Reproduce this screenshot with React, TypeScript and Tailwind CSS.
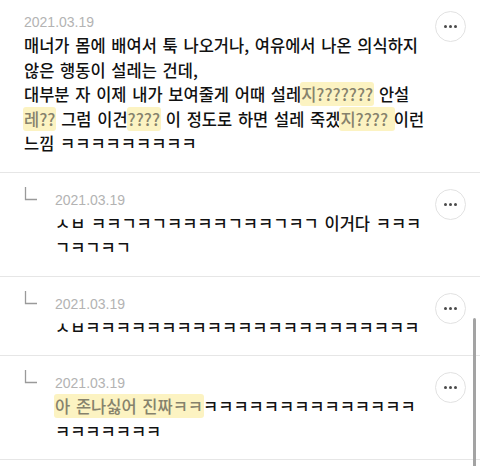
import React from "react";

type Part = { text: string; mark?: boolean };

type Comment = {
  id: number;
  date: string;
  reply?: boolean;
  lines: Part[][];
};

const comments: Comment[] = [
  {
    id: 1,
    date: "2021.03.19",
    lines: [
      [{ text: "매너가 몸에 배여서 툭 나오거나, 여유에서 나온 의식하지" }],
      [{ text: "않은 행동이 설레는 건데," }],
      [
        { text: "대부분 자 이제 내가 보여줄게 어때 설레" },
        { text: "지???????", mark: true },
        { text: " 안설" },
      ],
      [
        { text: "레??", mark: true },
        { text: " 그럼 이건" },
        { text: "????", mark: true },
        { text: " 이 정도로 하면 설레 죽겠" },
        { text: "지???? ", mark: true },
        { text: "이런" },
      ],
      [{ text: "느낌 ㅋㅋㅋㅋㅋㅋㅋㅋㅋ" }],
    ],
  },
  {
    id: 2,
    date: "2021.03.19",
    reply: true,
    lines: [
      [{ text: "ㅅㅂ ㅋㅋㄱㅋㄱㅋㅋㅋㅋㄱㅋㅋㄱㅋㄱ 이거다 ㅋㅋㅋ" }],
      [{ text: "ㄱㅋㄱㅋㄱ" }],
    ],
  },
  {
    id: 3,
    date: "2021.03.19",
    reply: true,
    lines: [[{ text: "ㅅㅂㅋㅋㅋㅋㅋㅋㅋㅋㅋㅋㅋㅋㅋㅋㅋㅋㅋㅋㅋㅋㅋㅋ" }]],
  },
  {
    id: 4,
    date: "2021.03.19",
    reply: true,
    lines: [
      [
        { text: "아 존나싫어 진짜ㅋㅋ", mark: true },
        { text: "ㅋㅋㅋㅋㅋㅋㅋㅋㅋㅋㅋㅋㅋㅋ" },
      ],
      [{ text: "ㅋㅋㅋㅋㅋㅋㅋ" }],
    ],
  },
];

const MoreButton = () => (
  <button className="w-[31px] h-[31px] shrink-0 rounded-full border border-[#e2e2e2] bg-white flex items-center justify-center gap-[2px]">
    <span className="w-[3px] h-[3px] rounded-full bg-[#4a4a4a]" />
    <span className="w-[3px] h-[3px] rounded-full bg-[#4a4a4a]" />
    <span className="w-[3px] h-[3px] rounded-full bg-[#4a4a4a]" />
  </button>
);

const ReplyCorner = () => (
  <svg width="14" height="16" viewBox="0 0 14 16" className="shrink-0 mt-[-3px]">
    <path d="M1.5 1 V13.5 H13" fill="none" stroke="#9a9a9a" strokeWidth="1.3" />
  </svg>
);

const CommentRow = ({ c, first }: { c: Comment; first?: boolean }) => (
  <div
    className={`flex items-start border-b border-[#e6e6e6] pl-[24px] pr-[14px] ${
      first ? "pt-[11px]" : "pt-[16px]"
    } pb-[16px]`}
  >
    {c.reply && (
      <div className="w-[31px] shrink-0">
        <ReplyCorner />
      </div>
    )}
    <div className="flex-1 min-w-0">
      <div className="h-[22px] leading-[22px] text-[14px] text-[#b3b3b3] font-['Liberation_Sans',Arial,sans-serif]">
        {c.date}
      </div>
      <div className="text-[16.5px] leading-[24.5px] text-[#111111] font-medium [word-spacing:2px] whitespace-nowrap">
        {c.lines.map((line, i) => (
          <div key={i}>
            {line.map((p, j) =>
              p.mark ? (
                <span
                  key={j}
                  className="bg-[#fcf3c2] text-[#86826c] rounded-[3px] px-[1px] -mx-[1px]"
                >
                  {p.text}
                </span>
              ) : (
                <span key={j}>{p.text}</span>
              )
            )}
          </div>
        ))}
      </div>
    </div>
    <MoreButton />
  </div>
);

export default function App() {
  return (
    <div className="relative w-[480px] h-[466px] overflow-hidden bg-white font-['Noto_Sans_CJK_KR','Noto_Sans',sans-serif]">
      {comments.map((c, i) => (
        <CommentRow key={c.id} c={c} first={i === 0} />
      ))}
      {/* overlay scrollbar */}
      <div className="absolute right-[4px] top-[318px] w-[3px] h-[160px] rounded-full bg-[#a3a3a3]" />
    </div>
  );
}
